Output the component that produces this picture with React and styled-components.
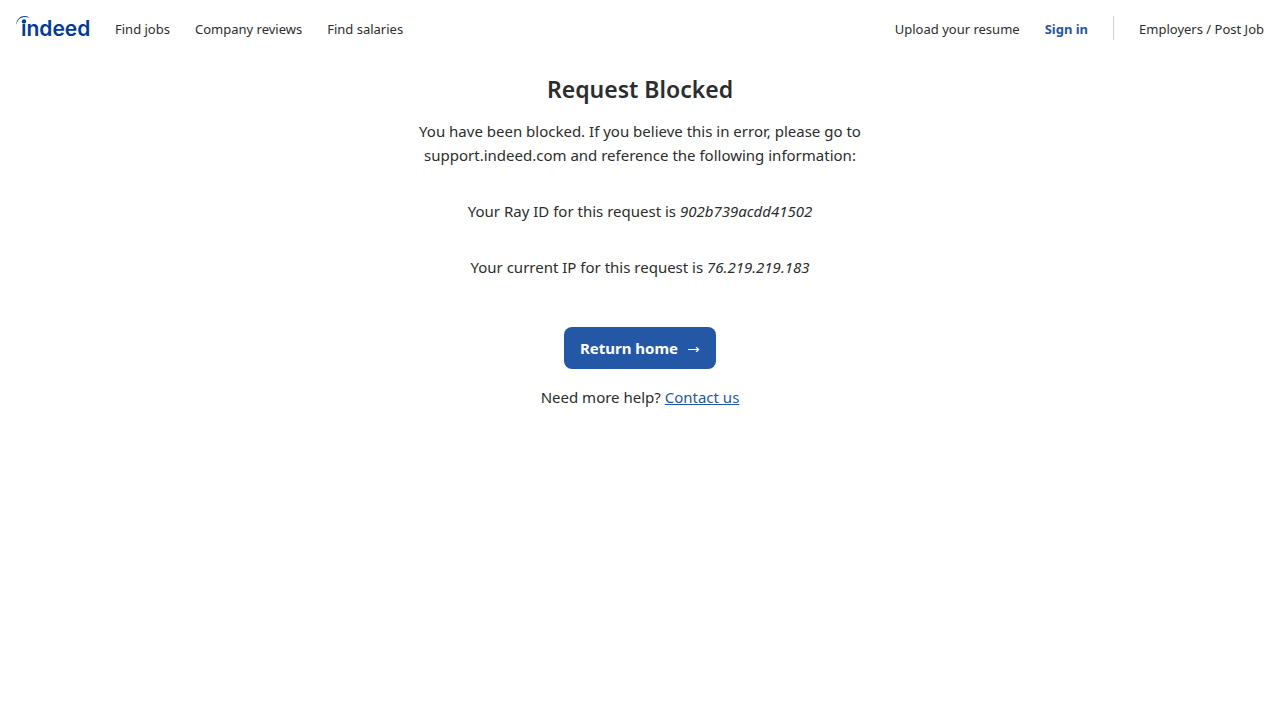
import React from "react";
import styled, { createGlobalStyle } from "styled-components";

const GlobalStyle = createGlobalStyle`
  * { box-sizing: border-box; }
  body {
    margin: 0;
    background: #fff;
    color: #2d2d2d;
    font-family: "Noto Sans", sans-serif;
    font-size: 15px;
    line-height: 24px;
  }
`;

const Header = styled.header`
  display: flex;
  align-items: center;
  justify-content: space-between;
  padding: 16px;
`;

const NavGroup = styled.nav`
  display: flex;
  align-items: center;
  gap: 25px;
  height: 24px;
`;

const NavLink = styled.a`
  padding-top: 2px;
  color: ${(p) => (p.$strong ? "#2557a7" : "#2d2d2d")};
  font-size: 13px;
  font-weight: ${(p) => (p.$strong ? 700 : 400)};
  text-decoration: none;
  white-space: nowrap;
`;

const Divider = styled.span`
  width: 1px;
  height: 24px;
  background: #d4d2d0;
`;

const LogoLink = styled.a`
  display: flex;
`;

const LogoMark = styled.svg`
  display: block;
  width: 74px;
  height: 24px;
  overflow: visible;
  fill: #003a9b;
`;

const LogoWord = styled.text`
  font-family: "Inter", sans-serif;
  font-size: 21px;
  font-weight: 600;
`;

const Main = styled.main`
  display: flex;
  flex-direction: column;
  align-items: center;
  padding: 15px 16px;
  text-align: center;
`;

const Title = styled.h1`
  margin: 0 0 12px;
  font-size: 23px;
  font-weight: 600;
  line-height: 36px;
`;

const Message = styled.p`
  max-width: 456px;
  margin: 0 0 32px;
`;

const HomeButton = styled.button`
  display: flex;
  align-items: center;
  gap: 8px;
  height: 42px;
  margin: 16px 0;
  padding: 0 16px;
  border: 0;
  border-radius: 8px;
  background: #2557a7;
  color: #fff;
  font: inherit;
  font-weight: 700;
  cursor: pointer;
`;

const Arrow = styled.svg`
  width: 14px;
  height: 10px;
  fill: currentColor;
`;

const Help = styled.p`
  margin: 0;
`;

const HelpLink = styled.a`
  color: #2557a7;
`;

function Logo() {
  return (
    <LogoLink href="#home" aria-label="Indeed home">
      <LogoMark viewBox="0 0 74 24">
        <LogoWord x="5" y="20">ındeed</LogoWord>
        <circle cx="8" cy="5.4" r="2.2" />
        <path d="M0 9C.6 3.4 4 0 8.8 0C11 0 12.5 .7 13.8 2C9.6 .2 5.400 .6 2.600 3.800C1.400 5.300 .6 7.500 0 9Z" />
      </LogoMark>
    </LogoLink>
  );
}

export default function App() {
  return (
    <>
      <GlobalStyle />
      <Header>
        <NavGroup aria-label="Primary">
          <Logo />
          <NavLink href="#jobs">Find jobs</NavLink>
          <NavLink href="#reviews">Company reviews</NavLink>
          <NavLink href="#salaries">Find salaries</NavLink>
        </NavGroup>
        <NavGroup aria-label="Account">
          <NavLink href="#resume">Upload your resume</NavLink>
          <NavLink href="#signin" $strong>Sign in</NavLink>
          <Divider />
          <NavLink href="#employers">Employers / Post Job</NavLink>
        </NavGroup>
      </Header>
      <Main>
        <Title>Request Blocked</Title>
        <Message>
          You have been blocked. If you believe this in error, please go to
          support.indeed.com and reference the following information:
        </Message>
        <Message>
          Your Ray ID for this request is <em>902b739acdd41502</em>
        </Message>
        <Message>
          Your current IP for this request is <em>76.219.219.183</em>
        </Message>
        <HomeButton type="button">
          Return home
          <Arrow viewBox="0 0 14 10" aria-hidden="true">
            <path d="M2 6H11L9.500 4H11L13.500 6.500L11 9H9.500L11 7H2Z" />
          </Arrow>
        </HomeButton>
        <Help>
          Need more help? <HelpLink href="#contact">Contact us</HelpLink>
        </Help>
      </Main>
    </>
  );
}
